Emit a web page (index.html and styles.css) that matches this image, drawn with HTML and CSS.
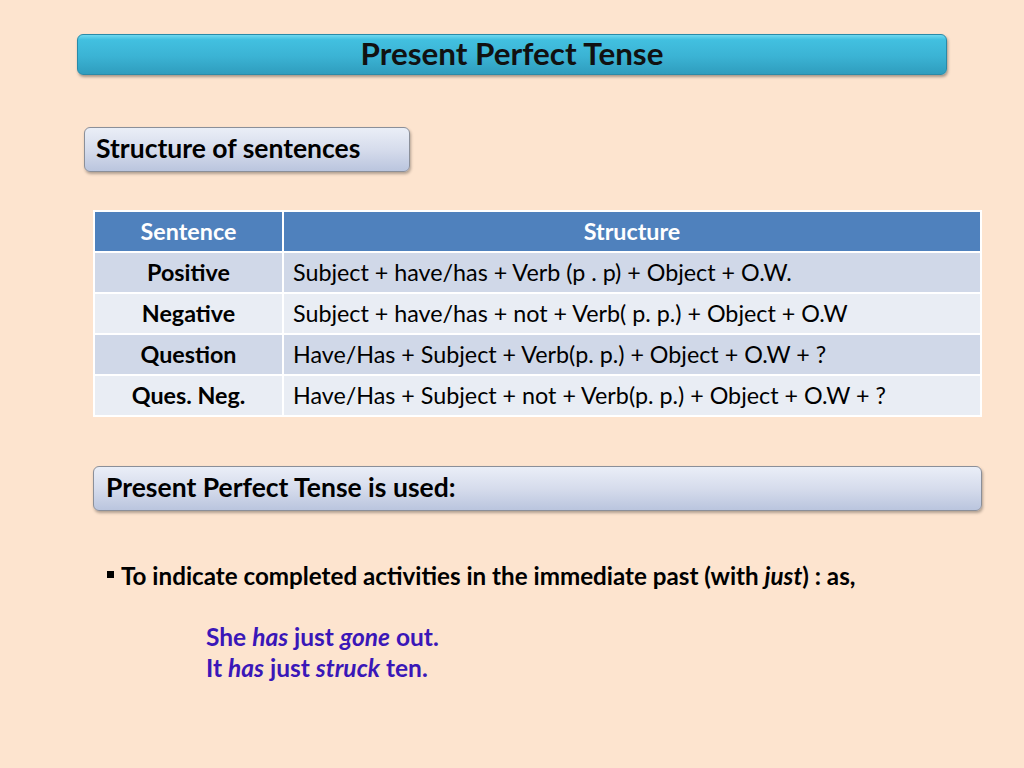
FILE: index.html
```html
<!DOCTYPE html>
<html lang="en">
<head>
<meta charset="utf-8">
<title>Present Perfect Tense</title>
<link rel="stylesheet" href="styles.css">
</head>
<body>
<main class="slide">
  <h1 class="title-bar">Present Perfect Tense</h1>
  <h2 class="label-box label-structure">Structure of sentences</h2>
  <table class="grid">
    <thead>
      <tr><th class="c1">Sentence</th><th class="c2">Structure</th></tr>
    </thead>
    <tbody>
      <tr class="odd"><td class="c1">Positive</td><td class="c2">Subject + have/has + Verb (p . p) + Object + O.W.</td></tr>
      <tr class="even"><td class="c1">Negative</td><td class="c2">Subject + have/has + not + Verb( p. p.) + Object + O.W</td></tr>
      <tr class="odd"><td class="c1">Question</td><td class="c2">Have/Has + Subject + Verb(p. p.) + Object + O.W + ?</td></tr>
      <tr class="even"><td class="c1">Ques. Neg.</td><td class="c2">Have/Has + Subject + not + Verb(p. p.) + Object + O.W + ?</td></tr>
    </tbody>
  </table>
  <h2 class="label-box label-used">Present Perfect Tense is used:</h2>
  <div class="bullet"><span class="sq"></span><span class="btext">To indicate completed activities in the immediate past (with <em>just</em>) : as,</span></div>
  <div class="examples">
    <p>She <em>has</em> just <em>gone</em> out.</p>
    <p>It <em>has</em> just <em>struck</em> ten.</p>
  </div>
</main>
</body>
</html>
```
FILE: styles.css
```css
html, body {
  margin: 0;
  padding: 0;
}
body {
  background: #fde4cf;
  font-family: Lato, "Open Sans", "Liberation Sans", sans-serif;
  color: #000;
  width: 1024px;
  height: 768px;
  overflow: hidden;
}
.slide {
  padding-top: 34px;
  display: flex;
  flex-direction: column;
  align-items: flex-start;
}
.title-bar {
  margin: 0 0 0 77px;
  width: 870px;
  height: 41px;
  box-sizing: border-box;
  border: 1px solid #2a8aa8;
  border-radius: 6px;
  background: linear-gradient(to bottom, #6fd8ef 0%, #42c0e0 12%, #3bb3d4 55%, #2f9dbe 100%);
  box-shadow: 1px 2px 3px rgba(0,0,0,0.35);
  font-size: 31.4px;
  font-weight: 700;
  line-height: 37px;
  text-align: center;
  color: #111;
}
.label-box {
  margin: 0;
  height: 45px;
  box-sizing: border-box;
  border: 1px solid #8b8f99;
  border-radius: 6px;
  background: linear-gradient(to bottom, #eaeef7 0%, #d6dcec 50%, #bac5de 100%);
  box-shadow: 1px 2px 3px rgba(0,0,0,0.3);
  font-size: 26.5px;
  font-weight: 700;
  line-height: 41px;
  color: #000;
}
.label-structure {
  margin: 52px 0 0 84px;
  width: 326px;
  padding-left: 11px;
}
.grid {
  margin: 38px 0 0 93px;
  width: 889px;
  border-collapse: collapse;
  font-size: 23.3px;
}
.grid th, .grid td {
  border: 2px solid #fff;
  height: 41px;
  padding: 0 0 1px;
  box-sizing: border-box;
  line-height: 28px;
}
.grid th {
  background: #4f81bd;
  color: #fff;
  font-weight: 700;
  text-align: center;
}
.grid .c1 {
  width: 189px;
  text-align: center;
}
.grid td.c1 {
  font-weight: 700;
}
.grid td.c2 {
  text-align: left;
  padding-left: 9px;
}
.grid tr.odd td {
  background: #d0d8e8;
}
.grid tr.even td {
  background: #e9edf4;
}
.label-used {
  margin: 49px 0 0 93px;
  width: 889px;
  padding-left: 12px;
}
.bullet {
  margin: 51px 0 0 107px;
  font-size: 24.2px;
  font-weight: 700;
  line-height: 28px;
  display: flex;
  align-items: center;
}
.sq {
  flex: none;
  width: 7px;
  height: 7px;
  background: #000;
  margin-right: 7px;
  margin-top: -4px;
}
.bullet em {
  font-style: italic;
}
.examples {
  margin: 31px 0 0 206px;
  color: #3a17b8;
  font-size: 24.5px;
  font-weight: 700;
  line-height: 31px;
}
.examples p {
  margin: 0;
}
```
